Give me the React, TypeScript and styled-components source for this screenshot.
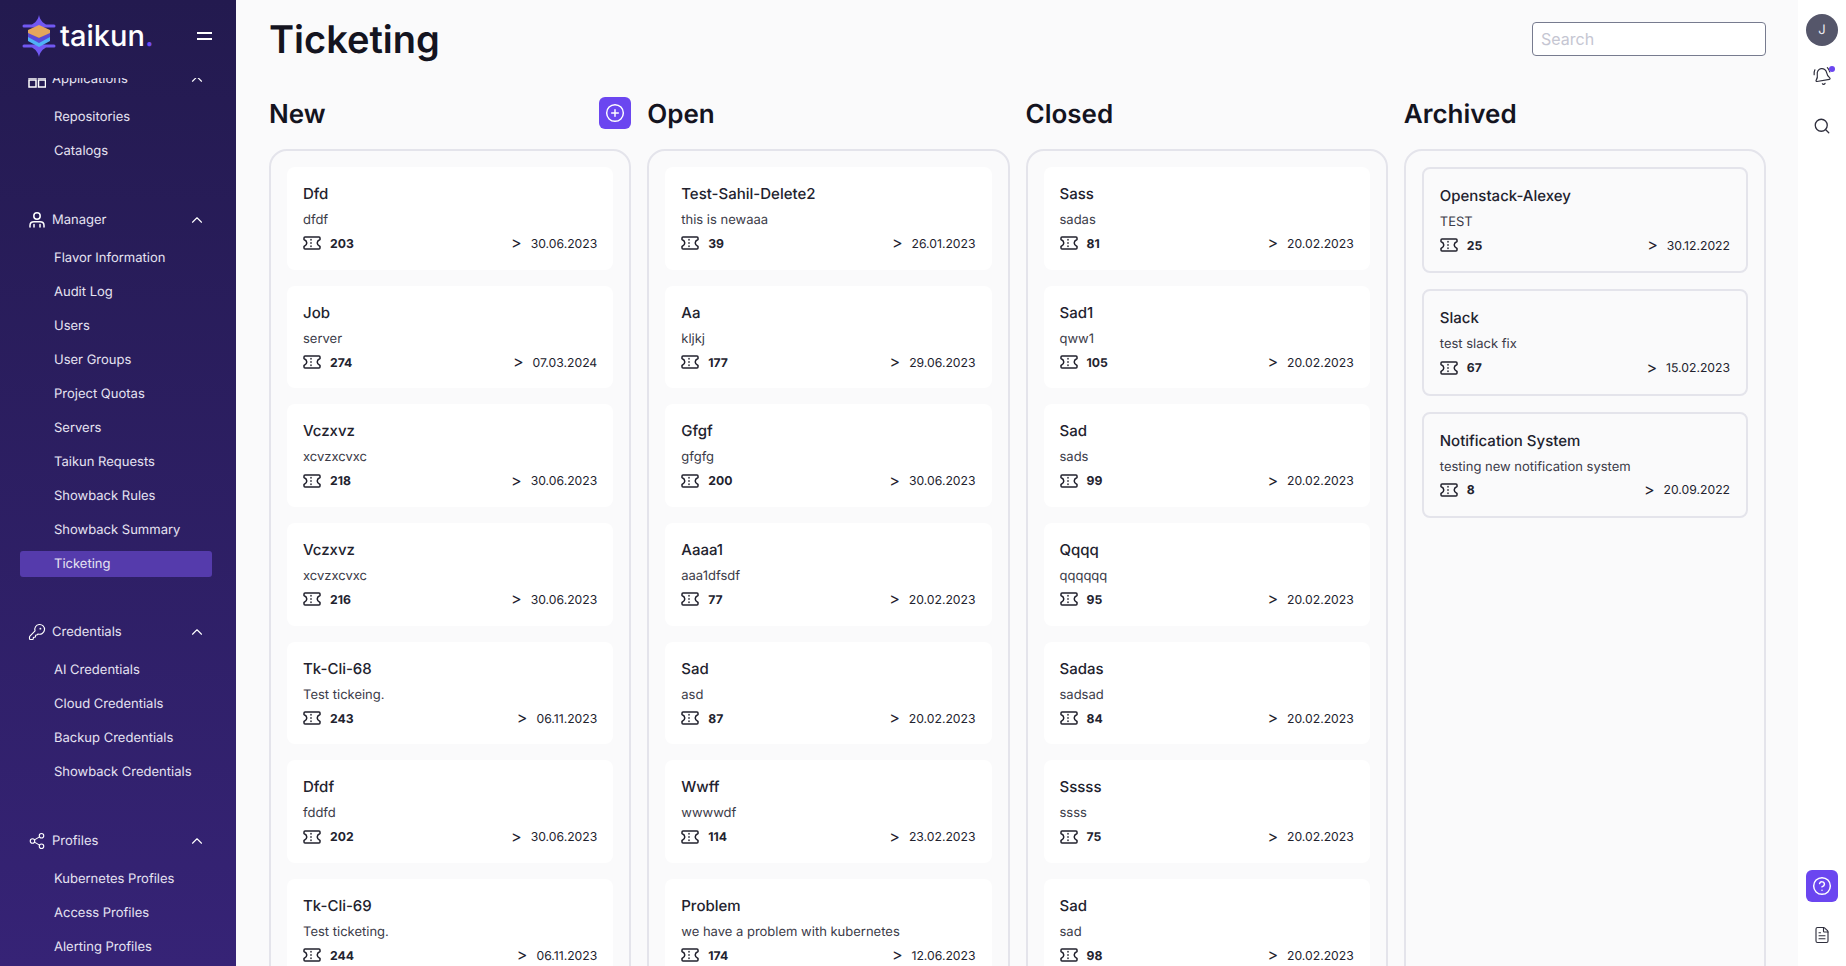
import React from 'react'
import styled, { createGlobalStyle } from 'styled-components'
import { BellRing, ChevronUp, CircleHelp, CirclePlus, FileText, KeyRound, Search, Share2 } from 'lucide-react'

const GlobalStyle = createGlobalStyle`
  html, body {
    margin: 0;
    height: 100%;
    overflow: hidden;
    background: #fafafb;
    font-family: Inter, 'Noto Sans', sans-serif;
    text-rendering: geometricPrecision;
  }
`

const Page = styled.div`
  display: flex;
  width: 1846px;
  height: 966px;
  overflow: hidden;
`

const Sidebar = styled.aside`
  width: 236px;
  flex: none;
  display: flex;
  flex-direction: column;
  background: linear-gradient(180deg, #231a4f 0%, #362376 100%);
  color: #e6e3f2;
  overflow: hidden;
`

const LogoBar = styled.div`
  height: 71px;
  flex: none;
  display: flex;
  align-items: center;
  padding: 0 24px 0 21px;
  justify-content: space-between;
`

const Brand = styled.div`
  display: flex;
  align-items: center;
  gap: 3px;
`

const BrandName = styled.span`
  color: #fff;
  font-size: 29px;
  font-weight: 500;
  line-height: 40px;
  span {
    color: #6e4cf5;
  }
`

const MenuButton = styled.div`
  width: 15px;
  height: 4px;
  border-top: 2px solid #fff;
  border-bottom: 2px solid #fff;
`

const NavClip = styled.div`
  flex: 1;
  overflow: hidden;
  margin-top: 7px;
`

const Nav = styled.nav`
  margin-top: -16px;
  display: flex;
  flex-direction: column;
  gap: 38.5px;
`

const Section = styled.section`
  display: flex;
  flex-direction: column;
`

const SectionHead = styled.div`
  height: 34px;
  display: flex;
  align-items: center;
  gap: 6px;
  padding: 0 30px 0 28px;
  font-size: 13px;
  margin-bottom: 8px;
  svg {
    flex: none;
    color: #fff;
  }
`

const SectionTitle = styled.span`
  flex: 1;
`

const NavItem = styled.div<{ $active?: boolean }>`
  height: 26px;
  margin: 0 24px 8px 20px;
  padding-left: 34px;
  display: flex;
  align-items: center;
  border-radius: 3px;
  font-size: 13px;
  background: ${props => (props.$active ? '#553bac' : 'transparent')};
  &:last-child {
    margin-bottom: 0;
  }
`

const Main = styled.main`
  flex: 1;
  min-width: 0;
  padding: 0 32px 0 33px;
  overflow: hidden;
`

const TopBar = styled.header`
  height: 78px;
  display: flex;
  align-items: center;
  justify-content: space-between;
`

const Title = styled.h1`
  margin: 1px 0 0;
  font-size: 38px;
  font-weight: 600;
  color: #14141f;
`

const SearchBox = styled.input`
  width: 234px;
  height: 34px;
  box-sizing: border-box;
  padding: 0 8px;
  border: 1px solid #777b8f;
  border-radius: 4px;
  background: #fff;
  font-family: inherit;
  font-size: 16px;
  &::placeholder {
    color: #c5c6d2;
  }
`

const Board = styled.div`
  display: grid;
  grid-template-columns: repeat(4, 1fr);
  column-gap: 16px;
`

const Column = styled.div`
  min-width: 0;
`

const ColumnHead = styled.div`
  height: 71px;
  display: flex;
  align-items: center;
  justify-content: space-between;
`

const ColumnTitle = styled.h2`
  margin: 2px 0 0;
  font-size: 26px;
  font-weight: 600;
  color: #14141f;
`

const AddButton = styled.div`
  width: 32px;
  height: 32px;
  margin-top: -2px;
  border-radius: 6px;
  background: #6b46f0;
  color: #fff;
  display: flex;
  align-items: center;
  justify-content: center;
`

const Lane = styled.div`
  box-sizing: border-box;
  height: 1000px;
  padding: 16px;
  border: 2px solid #e4e4eb;
  border-radius: 18px;
  display: flex;
  flex-direction: column;
  gap: 16px;
`

const Card = styled.article<{ $archived?: boolean }>`
  box-sizing: border-box;
  height: ${props => (props.$archived ? '106.4px' : '102.7px')};
  flex: none;
  padding: 17px 16px;
  border-radius: 8px;
  background: ${props => (props.$archived ? 'transparent' : '#fff')};
  border: ${props => (props.$archived ? '2px solid #e4e4eb' : '0')};
  display: flex;
  flex-direction: column;
  color: #22222e;
`

const CardTitle = styled.div`
  font-size: 15px;
  font-weight: 500;
  line-height: 20px;
`

const CardText = styled.div`
  margin-top: 7px;
  font-size: 13px;
  line-height: 18px;
  color: #3b3b48;
`

const CardFoot = styled.div`
  margin-top: 5px;
  height: 20px;
  display: flex;
  align-items: center;
  font-size: 12.2px;
`

const TicketId = styled.span`
  flex: 1;
  margin-left: 9px;
  font-weight: 700;
`

const Due = styled.span`
  display: flex;
  align-items: center;
  gap: 9px;
  span {
    font-size: 16px;
    line-height: 16px;
    margin-top: -2px;
  }
`

const Rail = styled.aside`
  width: 48px;
  flex: none;
  background: #fff;
  display: flex;
  flex-direction: column;
  align-items: center;
  padding-top: 14px;
  box-sizing: border-box;
  color: #2f2f3d;
`

const Avatar = styled.div`
  width: 32px;
  height: 32px;
  margin-bottom: 21px;
  border-radius: 50%;
  background: #55566a;
  color: #e8e8ee;
  font-size: 13px;
  display: flex;
  align-items: center;
  justify-content: center;
`

const BellWrap = styled.div`
  position: relative;
  height: 20px;
  margin-bottom: 30px;
  svg {
    transform: rotate(-10deg);
  }
`

const BellDot = styled.span`
  position: absolute;
  top: -1px;
  right: -3px;
  width: 6px;
  height: 6px;
  border-radius: 50%;
  background: #6b46f0;
`

const RailSpacer = styled.div`
  flex: 1;
`

const HelpButton = styled.div`
  width: 32px;
  height: 32px;
  border-radius: 6px;
  background: #6b46f0;
  color: #fff;
  display: flex;
  align-items: center;
  justify-content: center;
  margin-bottom: 24px;
`

const RailFile = styled.div`
  height: 20px;
  margin-bottom: 20px;
`

const TicketIcon = () => (
  <svg width='18' height='14' viewBox='0 0 18 14' fill='none' stroke='#22222e' strokeWidth='1.5' strokeLinejoin='round' strokeLinecap='round'>
    <path d='M2 1h14a1 1 0 0 1 1 1v1.500C15 4.500 14.200 5.700 14.200 7S15 9.500 17 10.500V12a1 1 0 0 1-1 1H2a1 1 0 0 1-1-1v-1.500C3 9.500 3.800 8.300 3.800 7S3 4.500 1 3.500V2a1 1 0 0 1 1-1z' />
    <path d='M8 3.400v.6M8 6.700v.6M8 10v.6' />
  </svg>
)

const GridIcon = () => (
  <svg width='18' height='18' viewBox='0 0 18 18' fill='none' stroke='currentColor' strokeWidth='1.5'>
    <rect x='1' y='1' width='7' height='7' />
    <rect x='10.500' y='1' width='7' height='7' />
    <rect x='1' y='10' width='7' height='7' />
    <rect x='10.500' y='10' width='7' height='7' />
  </svg>
)

const PersonIcon = () => (
  <svg width='18' height='18' viewBox='0 0 18 18' fill='none' stroke='currentColor' strokeWidth='1.5' strokeLinecap='round'>
    <circle cx='9' cy='5' r='3.200' />
    <path d='M2 16v-1.500C2 12 4 10.800 6 10.800h6c2 0 4 1.200 4 3.700V16' />
    <path d='M6 13.500V16M12 13.500V16' />
  </svg>
)

const Logo = () => (
  <svg width='36' height='42' viewBox='0 0 36 42'>
    <path d='M18 0c1 5 4 8 7 9.500h8a1.500 1.500 0 0 1 0 3H3a1.500 1.500 0 0 1 0-3h8C14 8 17 5 18 0z' fill='#7158f2' />
    <path d='M18 42c1-5 4-8 7-9.500h8a1.500 1.500 0 0 0 0-3H3a1.500 1.500 0 0 0 0 3h8c3 1.500 6 4.500 7 9.500z' fill='#7158f2' />
    <path d='M7 21l11 6 11-6v5l-11 6-11-6z' fill='#4fb2f5' />
    <path d='M7 17l11 6 11-6v5l-11 6-11-6z' fill='#5a48d8' />
    <path d='M7 15l11-5 11 5v3l-11 5-11-5z' fill='#e5a65c' />
  </svg>
)

type Ticket = { title: string; text: string; id: number; date: string }

const newTickets: Ticket[] = [
  { title: 'Dfd', text: 'dfdf', id: 203, date: '30.06.2023' },
  { title: 'Job', text: 'server', id: 274, date: '07.03.2024' },
  { title: 'Vczxvz', text: 'xcvzxcvxc', id: 218, date: '30.06.2023' },
  { title: 'Vczxvz', text: 'xcvzxcvxc', id: 216, date: '30.06.2023' },
  { title: 'Tk-Cli-68', text: 'Test tickeing.', id: 243, date: '06.11.2023' },
  { title: 'Dfdf', text: 'fddfd', id: 202, date: '30.06.2023' },
  { title: 'Tk-Cli-69', text: 'Test ticketing.', id: 244, date: '06.11.2023' },
]

const openTickets: Ticket[] = [
  { title: 'Test-Sahil-Delete2', text: 'this is newaaa', id: 39, date: '26.01.2023' },
  { title: 'Aa', text: 'kljkj', id: 177, date: '29.06.2023' },
  { title: 'Gfgf', text: 'gfgfg', id: 200, date: '30.06.2023' },
  { title: 'Aaaa1', text: 'aaa1dfsdf', id: 77, date: '20.02.2023' },
  { title: 'Sad', text: 'asd', id: 87, date: '20.02.2023' },
  { title: 'Wwff', text: 'wwwwdf', id: 114, date: '23.02.2023' },
  { title: 'Problem', text: 'we have a problem with kubernetes', id: 174, date: '12.06.2023' },
]

const closedTickets: Ticket[] = [
  { title: 'Sass', text: 'sadas', id: 81, date: '20.02.2023' },
  { title: 'Sad1', text: 'qww1', id: 105, date: '20.02.2023' },
  { title: 'Sad', text: 'sads', id: 99, date: '20.02.2023' },
  { title: 'Qqqq', text: 'qqqqqq', id: 95, date: '20.02.2023' },
  { title: 'Sadas', text: 'sadsad', id: 84, date: '20.02.2023' },
  { title: 'Sssss', text: 'ssss', id: 75, date: '20.02.2023' },
  { title: 'Sad', text: 'sad', id: 98, date: '20.02.2023' },
]

const archivedTickets: Ticket[] = [
  { title: 'Openstack-Alexey', text: 'TEST', id: 25, date: '30.12.2022' },
  { title: 'Slack', text: 'test slack fix', id: 67, date: '15.02.2023' },
  { title: 'Notification System', text: 'testing new notification system', id: 8, date: '20.09.2022' },
]

const columns = [
  { name: 'New', tickets: newTickets },
  { name: 'Open', tickets: openTickets },
  { name: 'Closed', tickets: closedTickets },
  { name: 'Archived', tickets: archivedTickets },
]

const sections = [
  { name: 'Applications', icon: <GridIcon />, items: ['Repositories', 'Catalogs'] },
  { name: 'Manager', icon: <PersonIcon />, items: ['Flavor Information', 'Audit Log', 'Users', 'User Groups', 'Project Quotas', 'Servers', 'Taikun Requests', 'Showback Rules', 'Showback Summary', 'Ticketing'] },
  { name: 'Credentials', icon: <KeyRound size={18} strokeWidth={1.5} />, items: ['AI Credentials', 'Cloud Credentials', 'Backup Credentials', 'Showback Credentials'] },
  { name: 'Profiles', icon: <Share2 size={18} strokeWidth={1.5} />, items: ['Kubernetes Profiles', 'Access Profiles', 'Alerting Profiles'] },
]

export default function App () {
  return (
    <Page>
      <GlobalStyle />
      <Sidebar>
        <LogoBar>
          <Brand>
            <Logo />
            <BrandName>taikun<span>.</span></BrandName>
          </Brand>
          <MenuButton />
        </LogoBar>
        <NavClip>
          <Nav>
            {sections.map(section => (
              <Section key={section.name}>
                <SectionHead>
                  {section.icon}
                  <SectionTitle>{section.name}</SectionTitle>
                  <ChevronUp size={18} strokeWidth={1.5} />
                </SectionHead>
                {section.items.map(item => (
                  <NavItem key={item} $active={item === 'Ticketing'}>{item}</NavItem>
                ))}
              </Section>
            ))}
          </Nav>
        </NavClip>
      </Sidebar>
      <Main>
        <TopBar>
          <Title>Ticketing</Title>
          <SearchBox placeholder='Search' />
        </TopBar>
        <Board>
          {columns.map(column => {
            const archived = column.name === 'Archived'
            return (
              <Column key={column.name}>
                <ColumnHead>
                  <ColumnTitle>{column.name}</ColumnTitle>
                  {column.name === 'New' && (
                    <AddButton><CirclePlus size={20} strokeWidth={1.75} /></AddButton>
                  )}
                </ColumnHead>
                <Lane>
                  {column.tickets.map(ticket => (
                    <Card key={ticket.id} $archived={archived}>
                      <CardTitle>{ticket.title}</CardTitle>
                      <CardText>{ticket.text}</CardText>
                      <CardFoot>
                        <TicketIcon />
                        <TicketId>{ticket.id}</TicketId>
                        <Due><span>&gt;</span>{ticket.date}</Due>
                      </CardFoot>
                    </Card>
                  ))}
                </Lane>
              </Column>
            )
          })}
        </Board>
      </Main>
      <Rail>
        <Avatar>J</Avatar>
        <BellWrap>
          <BellRing size={19} strokeWidth={1.5} />
          <BellDot />
        </BellWrap>
        <Search size={18} strokeWidth={1.75} />
        <RailSpacer />
        <HelpButton><CircleHelp size={20} strokeWidth={1.75} /></HelpButton>
        <RailFile><FileText size={18} strokeWidth={1.5} /></RailFile>
      </Rail>
    </Page>
  )
}
